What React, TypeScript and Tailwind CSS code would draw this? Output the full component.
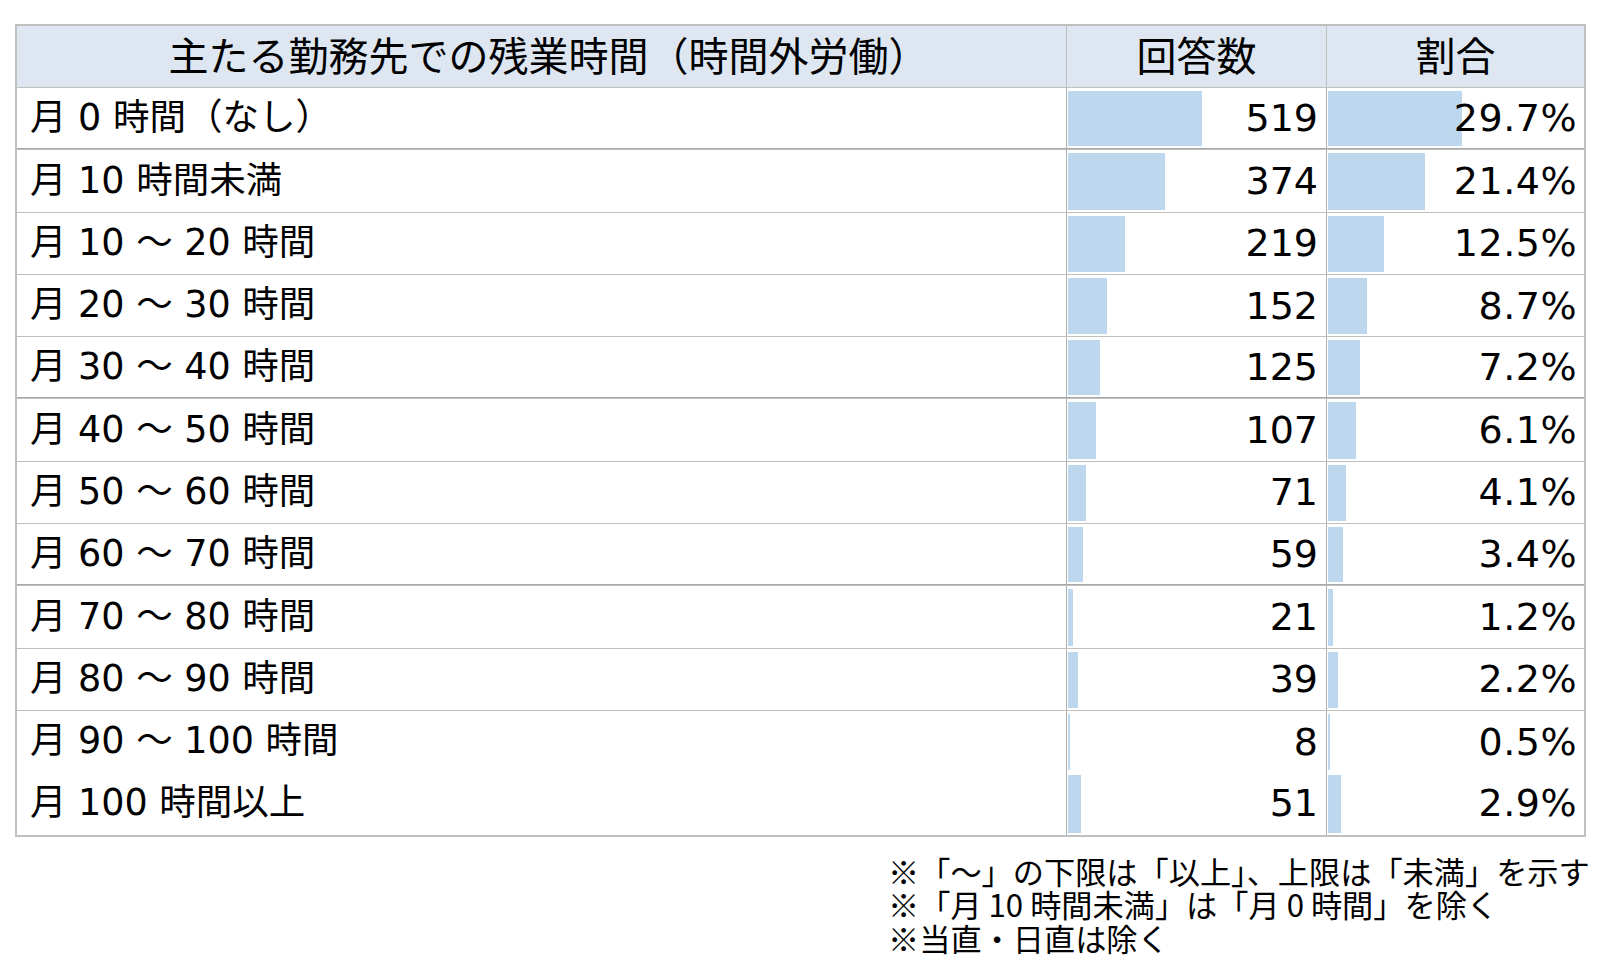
const rows = [
  { label: "月 0 時間（なし）", count: 519, pct: 29.7 },
  { label: "月 10 時間未満", count: 374, pct: 21.4 },
  { label: "月 10 ～ 20 時間", count: 219, pct: 12.5 },
  { label: "月 20 ～ 30 時間", count: 152, pct: 8.7 },
  { label: "月 30 ～ 40 時間", count: 125, pct: 7.2 },
  { label: "月 40 ～ 50 時間", count: 107, pct: 6.1 },
  { label: "月 50 ～ 60 時間", count: 71, pct: 4.1 },
  { label: "月 60 ～ 70 時間", count: 59, pct: 3.4 },
  { label: "月 70 ～ 80 時間", count: 21, pct: 1.2 },
  { label: "月 80 ～ 90 時間", count: 39, pct: 2.2 },
  { label: "月 90 ～ 100 時間", count: 8, pct: 0.5 },
  { label: "月 100 時間以上", count: 51, pct: 2.9 },
]

// rows after which excel drew a heavier rule
const heavy = [0, 4, 7]

const font = "font-['DejaVu_Sans','Noto_Sans_CJK_JP',sans-serif]"

export default function App() {
  return (
    <div className={`h-[970px] w-[1600px] bg-white pl-[15px] pt-[24px] text-black ${font}`}>
      <div className="w-[1571px] border-2 border-[#c0c0c0]">
        <div className="grid h-[61px] grid-cols-[1050px_260px_257px] bg-[#dde6f1] text-[40px] leading-none">
          <div className="flex items-center justify-center border-r border-[#bfbfbf] pl-[14px]">
            主たる勤務先での残業時間（時間外労働）
          </div>
          <div className="flex items-center justify-center border-r border-[#bfbfbf]">
            回答数
          </div>
          <div className="flex items-center justify-center">割合</div>
        </div>

        {rows.map((r, i) => {
          const line =
            i === rows.length - 1
              ? ""
              : heavy.includes(i)
                ? "border-t border-b border-t-[#bfbfbf] border-b-[#a8a8a8]"
                : "border-t border-[#bfbfbf]"
          return (
            <div
              key={r.label}
              className={`grid h-[62.3px] grid-cols-[1050px_260px_257px] leading-none ${line}`}
            >
              <div className="flex items-center border-r border-[#b0b0b0] pl-[13px] text-[36.5px]">
                {r.label}
              </div>
              <div className="relative flex items-center justify-end border-r border-[#b0b0b0] pr-[8px] text-[38px]">
                <div
                  className="absolute bottom-[2px] left-[1px] top-[3px] bg-[#bdd7ee]"
                  style={{ width: Math.max(1, r.count * 0.2582) }}
                />
                <span className="relative">{r.count}</span>
              </div>
              <div className="relative flex items-center justify-end pr-[7px] text-[38px] tracking-[0.5px]">
                <div
                  className="absolute bottom-[2px] left-[1px] top-[3px] bg-[#bdd7ee]"
                  style={{ width: Math.max(1, r.pct * 4.51) }}
                />
                <span className="relative">{r.pct.toFixed(1)}%</span>
              </div>
            </div>
          )
        })}
      </div>

      <div className="ml-[873px] mt-[17px] font-['Noto_Sans_CJK_JP',sans-serif] text-[31.2px] leading-[33.5px]">
        <p>※「～」の下限は「以上」、上限は「未満」を示す</p>
        <p>※「月 10 時間未満」は「月 0 時間」を除く</p>
        <p>※当直・日直は除く</p>
      </div>
    </div>
  )
}
